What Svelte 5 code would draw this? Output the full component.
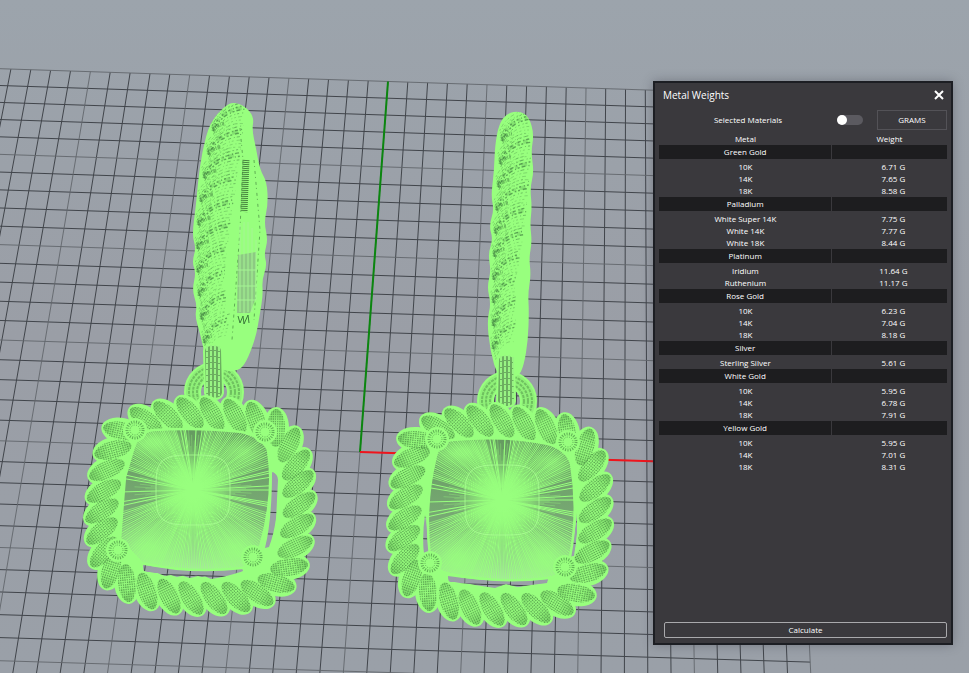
<script lang="ts">
	type Point = [number, number];

	const groups = [
		{ name: 'Green Gold', rows: [['10K', 6.71], ['14K', 7.65], ['18K', 8.58]] },
		{ name: 'Palladium', rows: [['White Super 14K', 7.75], ['White 14K', 7.77], ['White 18K', 8.44]] },
		{ name: 'Platinum', rows: [['Iridium', 11.64], ['Ruthenium', 11.17]] },
		{ name: 'Rose Gold', rows: [['10K', 6.23], ['14K', 7.04], ['18K', 8.18]] },
		{ name: 'Silver', rows: [['Sterling Silver', 5.61]] },
		{ name: 'White Gold', rows: [['10K', 5.95], ['14K', 6.78], ['18K', 7.91]] },
		{ name: 'Yellow Gold', rows: [['10K', 5.95], ['14K', 7.01], ['18K', 8.31]] }
	] as { name: string; rows: [string, number][] }[];

	let selectedOnly = $state(false);
	let open = $state(true);

	// perspective of the ground plane, origin where the axes meet
	const project = (i: number, j: number): Point => {
		const w = 1 + 0.0001 * i + 0.005746 * j;
		return [(360 + 22.13 * i + 3.629 * j) / w, (452 + 0.735 * i - 18.057 * j) / w];
	};
	const segment = (a: Point, b: Point) => `M${a[0].toFixed(1)} ${a[1].toFixed(1)}L${b[0].toFixed(1)} ${b[1].toFixed(1)}`;

	let major = '';
	let minor = '';
	for (let n = -20; n <= 20; n++) {
		const d = segment(project(n, -12), project(n, 20)) + (n >= -12 ? segment(project(-20, n), project(20, n)) : '');
		if (n % 5 === 0) major += d;
		else minor += d;
	}

	const smooth = (pts: Point[]) => {
		const mid = (a: Point, b: Point) => `${((a[0] + b[0]) / 2).toFixed(1)} ${((a[1] + b[1]) / 2).toFixed(1)}`;
		let d = `M${mid(pts[pts.length - 1], pts[0])}`;
		pts.forEach((p, k) => (d += `Q${p[0]} ${p[1]} ${mid(p, pts[(k + 1) % pts.length])}`));
		return d + 'Z';
	};

	const rope = (pts: Point[]) =>
		pts.map((p, k) => {
			const a = pts[(k + pts.length - 1) % pts.length];
			const b = pts[(k + 1) % pts.length];
			const tangent = (Math.atan2(b[1] - a[1], b[0] - a[0]) * 180) / Math.PI;
			return { x: p[0], y: p[1], angle: Math.round(tangent + 54) };
		});

	// facet rays run from the culet to the girdle, densest towards the corners
	const rays = (c: Point, rx: number, ry: number) => {
		let fine = '';
		let bold = '';
		let hatch = '';
		for (let k = 0; k < 240; k++) {
			const t = (k * Math.PI) / 120;
			const cos = Math.cos(t);
			const sin = Math.sin(t);
			const r = 1 / Math.pow(Math.pow(Math.abs(cos), 5) + Math.pow(Math.abs(sin), 5), 0.2);
			const diagonal = Math.abs(Math.sin(2 * t));
			const end: Point = [c[0] + cos * r * rx, c[1] + sin * r * ry];
			const wobble = ((k * 7) % 5) * 0.07;
			if (k % 6 === (k % 4 ? 0 : 1) || k % 7 === 0 || (k % 4 === 0 && diagonal > 0.35)) bold += segment(c, end);
			else if (diagonal > 0.5 || sin > 0.8) fine += segment(c, end);
			hatch += segment(
				[c[0] + cos * r * rx * 0.15, c[1] + sin * r * ry * 0.15],
				[c[0] + cos * r * rx * (0.48 + wobble), c[1] + sin * r * ry * (0.48 + wobble)]
			);
		}
		return { fine, bold, hatch };
	};

	const squircle = (c: Point, rx: number, ry: number) => {
		const pts: Point[] = [];
		for (let k = 0; k < 32; k++) {
			const t = (k * Math.PI) / 16;
			const r = 1 / Math.pow(Math.pow(Math.abs(Math.cos(t)), 4) + Math.pow(Math.abs(Math.sin(t)), 4), 0.25);
			pts.push([+(c[0] + Math.cos(t) * r * rx).toFixed(1), +(c[1] + Math.sin(t) * r * ry).toFixed(1)]);
		}
		return smooth(pts);
	};

	// dashed bands that wrap up the twisted hoop, bowed out by the given amount
	const twists = (count: number, from: Point, to: Point, width: number, rise: number, bow: number) => {
		const out: { d: string; dash: string; w: number; o: number }[] = [];
		for (let k = 0; k < count; k++) {
			const f = k / (count - 1);
			const x = from[0] + (to[0] - from[0]) * f - bow * Math.sin(Math.PI * f);
			const y = from[1] + (to[1] - from[1]) * f;
			const span = width * (0.7 + 0.3 * Math.sin(Math.PI * Math.min(1, f + 0.2)));
			const curve = (m: number, part: number) =>
				`M${(x + m * 0.6).toFixed(1)} ${(y + m * 2.6).toFixed(1)}q${(span * 0.25 * part).toFixed(1)} ${(-rise * 0.8 * part).toFixed(1)} ${((span - m) * part).toFixed(1)} ${(-(rise - m) * part).toFixed(1)}`;
			out.push({ d: curve(1, 0.9), dash: '6 3 3 4', w: 4, o: 0.2 });
			out.push({ d: curve(2, 0.35), dash: '3 1 1 1', w: 4, o: 0.4 });
			for (let m = -2; m < 7; m++) {
				out.push({
					d: curve(m, m < 0 ? 0.8 : 1),
					dash: m % 2 ? `${2 + (k % 3)} 3 1 2` : `2 ${2 + (k % 2)} 4 3 1 2`,
					w: m === 1 || m === 2 ? 1.4 : 0.8,
					o: m > -1 && m < 4 ? 0.6 : 0.35
				});
			}
		}
		return out;
	};

	const earrings = [
		{
			hoop: [[225, 106], [233, 102], [245, 106], [254, 117], [252, 130], [256, 148], [260, 170], [267, 182], [268, 205], [264, 222], [268, 240], [264, 254], [267, 265], [262, 280], [263, 295], [260, 313], [256, 337], [246, 363], [238, 371], [223, 371], [206, 360], [200, 333], [195, 317], [197, 305], [192, 290], [196, 273], [192, 262], [196, 248], [192, 235], [196, 205], [198, 182], [202, 152], [210, 122]] as Point[],
			twists: twists(10, [212, 126], [203, 338], 38, 24, 11),
			ring: { x: 213, y: 391, link: 'M204 351q0-6 9-6t9 6l1 42q-1 6-9 6t-9-6Z', lines: 'M207 346v50M211 345v53M215 345v53M219 346v50' },
			rope: [[122, 431], [146, 420], [168, 416], [190, 413], [212, 414], [235, 416], [256, 420], [276, 428], [289, 445], [296, 465], [298, 484], [299, 505], [297, 526], [295, 547], [289, 567], [276, 583], [257, 593], [236, 597], [214, 598], [191, 598], [169, 596], [147, 591], [127, 583], [111, 570], [104, 552], [102, 531], [102, 511], [104, 491], [107, 470], [113, 450]] as Point[],
			holes: 'M272 472Q278 474 278 480L276 518Q274 534 269 547L265 548Q272 520 272 472ZM143 565Q190 572 242 568L243 571Q226 577 211 579L202 575L190 578L177 574L165 576L155 572L144 572Z',
			gaps: 'M273 472Q277 475 277 481L276 516Q274 530 268 546L266 546Q275 512 273 472ZM143 566Q190 574 242 569L241 572L216 574L202 577L190 574L177 577L165 573L155 573L144 571Z',
			stone: 'M153 430Q200 427 242 432Q262 437 268 450Q275 495 260 547Q257 565 242 568Q190 574 142 563L120 540Q123 500 125 477L133 450Q138 432 153 430Z',
			center: [193, 490] as Point,
			rays: rays([193, 490], 77, 80),
			prongs: [[135, 430], [265, 432], [118, 550], [253, 557]] as Point[]
		},
		{
			hoop: [[507, 113], [520, 111], [529, 117], [534, 134], [531, 152], [534, 172], [530, 188], [532, 207], [530, 224], [532, 242], [529, 258], [531, 275], [528, 293], [529, 312], [528, 340], [524, 365], [518, 378], [498, 378], [490, 350], [487, 320], [491, 304], [487, 287], [491, 271], [488, 254], [493, 239], [489, 226], [494, 210], [491, 196], [494, 172], [495, 145], [499, 124]] as Point[],
			twists: twists(10, [501, 136], [492, 344], 34, 24, 3),
			ring: { x: 506, y: 400, link: 'M498 360q0-5 8-5t8 5l1 41q-1 6-9 6t-9-6Z', lines: 'M501 356v48M505 355v51M509 355v51M513 357v47' },
			rope: [[417, 440], [438, 428], [459, 423], [480, 421], [502, 421], [524, 424], [546, 427], [567, 433], [585, 447], [592, 466], [595, 488], [595, 510], [595, 531], [592, 552], [588, 573], [576, 593], [557, 603], [536, 608], [514, 609], [492, 609], [470, 607], [449, 601], [428, 592], [412, 578], [405, 559], [404, 538], [405, 518], [406, 497], [408, 477], [412, 457]] as Point[],
			holes: 'M425 515L430 551L424 553Q422 535 425 515ZM577 513L577 533L574 556L569 557Q575 535 577 513ZM448 576Q500 584 548 579L547 583L531 585L518 587L506 584L495 588L475 585L460 582L449 582Z',
			gaps: 'M426 516Q427 538 429 551L424 553Q423 535 426 516ZM577 515L577 533L574 556L571 556Q576 535 577 515ZM448 577Q500 586 548 580L545 583L531 584L518 587L506 584L495 587L475 584L460 583L449 581Z',
			stone: 'M452 440Q508 435 548 444Q566 449 571 463Q579 510 570 557Q564 576 548 578Q500 584 450 574Q433 570 430 557Q424 507 435 460Q438 442 452 440Z',
			center: [502, 500] as Point,
			rays: rays([502, 500], 77, 82),
			prongs: [[437, 439], [568, 442], [430, 563], [565, 567]] as Point[]
		}
	];
</script>

<main>
	<svg class="viewport" viewBox="0 0 969 673" preserveAspectRatio="xMinYMin slice" aria-hidden="true">
		<defs>
			<linearGradient id="sky" x1="0" y1="0" x2="0" y2="1">
				<stop offset="0" stop-color="#9ca4ac" />
				<stop offset="0.5" stop-color="#9a9ea6" />
				<stop offset="1" stop-color="#9aa0a8" />
			</linearGradient>
			<linearGradient id="facet" x1="0" y1="0" x2="0" y2="1">
				<stop offset="0" stop-color="#659a60" />
				<stop offset="0.65" stop-color="#7bab77" />
				<stop offset="1" stop-color="#aae8a0" />
			</linearGradient>
			<radialGradient id="glow">
				<stop offset="0.15" stop-color="#98ff7e" />
				<stop offset="0.5" stop-color="#98ff7e" stop-opacity="0.6" />
				<stop offset="1" stop-color="#98ff7e" stop-opacity="0" />
			</radialGradient>
			<linearGradient id="depth">
				<stop offset="0" stop-color="#367534" stop-opacity="0.35" />
				<stop offset="0.4" stop-color="#58a04e" stop-opacity="0.05" />
				<stop offset="0.65" stop-color="#58a04e" stop-opacity="0.05" />
				<stop offset="1" stop-color="#367534" stop-opacity="0.25" />
			</linearGradient>
			<pattern id="mesh" width="2.4" height="2.2" patternUnits="userSpaceOnUse">
				<rect width="1.4" height="1.2" fill="#4a8f43" opacity="0.8" />
			</pattern>
			<clipPath id="stone0"><path d={earrings[0].stone} /></clipPath>
			<clipPath id="stone1"><path d={earrings[1].stone} /></clipPath>
			<clipPath id="gaps0"><path d={earrings[0].gaps} /></clipPath>
			<clipPath id="gaps1"><path d={earrings[1].gaps} /></clipPath>
			<clipPath id="hoop0"><path d={smooth(earrings[0].hoop)} /></clipPath>
			<clipPath id="hoop1"><path d={smooth(earrings[1].hoop)} /></clipPath>
		</defs>

		<rect width="969" height="673" fill="url(#sky)" />
		<path class="grid" d={minor} />
		<path class="grid major" d={major} />
		<path class="axis-y" d={segment(project(0, 0), project(0, 20))} />
		<path class="axis-x" d={segment(project(0, 0), project(20, 0))} />

		{#each earrings as e, n}
			<circle cx={e.ring.x + 1} cy={e.ring.y + 1} r="21" class="ring-body" />
			{#each [17, 21, 25] as r}
				<circle cx={e.ring.x + 1} cy={e.ring.y + 1} {r} class="ring-mesh" />
			{/each}
			<circle cx={e.ring.x + 1} cy={e.ring.y + 1} r="29" class="ring-edge" />
			<circle cx={e.ring.x + 1} cy={e.ring.y + 1} r="14" class="ring-edge" />

			<path d={smooth(e.hoop)} fill="#98ff7e" />
			<g clip-path="url(#hoop{n})">
				{#each e.twists as t}
					<path class="twist" d={t.d} stroke-dasharray={t.dash} stroke-width={t.w} opacity={t.o} />
				{/each}
			</g>
			{#if n === 0}
				<path d="M240 128L243 160L240 230L232 340M254 160L260 230L254 320" class="seam" />
				<path d="M246 160L244 212" class="ticks" />
				<path d="M238 255L256 252L255 300L250 313H237Z" fill="#8bbd84" opacity="0.8" />
				<path d="M240 225V312M244 222V314M248 222V312M252 228V312M256 240V300M236 270H257M236 286H257M237 300H256" class="bars" />
				<path d="M238 316l2 7 3-7 1 8 4-9 1 8" class="scratch" />
			{/if}
			<path d={e.ring.link} class="link" />
			<path d={e.ring.lines} class="link-lines" />

			<path d={smooth(e.rope) + e.holes} fill="#98ff7e" fill-rule="evenodd" />
			{#each rope(e.rope) as lobe}
				<ellipse transform="translate({lobe.x} {lobe.y}) rotate({lobe.angle})" rx="21" ry="13" fill="#98ff7e" />
			{/each}
			{#each rope(e.rope) as lobe}
				<g transform="translate({lobe.x} {lobe.y}) rotate({lobe.angle})">
					<ellipse rx="19" ry="8" fill="url(#depth)" />
					<ellipse rx="19" ry="9" fill="url(#mesh)" />
				</g>
			{/each}

			<!-- ground seen through the openings of the frame -->
			<g clip-path="url(#gaps{n})">
				<rect width="969" height="673" fill="url(#sky)" />
				<path class="grid" d={minor} />
				<path class="grid major" d={major} />
			</g>

			<g clip-path="url(#stone{n})">
				<path d={e.stone} fill="url(#facet)" />
				<path d={e.rays.fine} class="ray" />
				<path d={e.rays.bold} class="ray bold" />
				<path d={e.rays.hatch} class="hatch" />
				<ellipse cx={e.center[0]} cy={e.center[1]} rx="36" ry="34" fill="url(#glow)" />
				<ellipse cx={e.center[0] - 40} cy={e.center[1] - 48} rx="40" ry="20" fill="url(#glow)" opacity="0.8" />
				<ellipse cx={e.center[0] + 50} cy={e.center[1] - 38} rx="24" ry="18" fill="url(#glow)" opacity="0.6" />
				<ellipse cx={e.center[0] - 44} cy={e.center[1] + 60} rx="44" ry="36" fill="url(#glow)" opacity="0.8" />
				<ellipse cx={e.center[0] + 44} cy={e.center[1] + 60} rx="38" ry="34" fill="url(#glow)" opacity="0.8" />
				<path d={squircle(e.center, 37, 35)} class="facet-ring" />
			</g>
			<path d={e.stone} class="girdle" />

			{#each e.prongs as p}
				<circle cx={p[0]} cy={p[1]} r="12" fill="#98ff7e" />
				<circle cx={p[0]} cy={p[1]} r="8" class="prong" />
				<circle cx={p[0]} cy={p[1]} r="5" class="prong thin" />
			{/each}
		{/each}
	</svg>

	{#if open}
		<section class="panel" aria-labelledby="panel-title">
			<header>
				<h1 id="panel-title">Metal Weights</h1>
				<button type="button" class="close" aria-label="Close" onclick={() => (open = false)}>
					<svg viewBox="0 0 10 10" width="10" height="10"><path d="M1 1L9 9M9 1L1 9" /></svg>
				</button>
			</header>

			<div class="options">
				<label for="selected">Selected Materials</label>
				<input id="selected" type="checkbox" bind:checked={selectedOnly} />
				<button type="button" class="unit">GRAMS</button>
			</div>

			<table>
				<thead>
					<tr><th scope="col" class="metal">Metal</th><th scope="col">Weight</th></tr>
				</thead>
				{#each groups as group}
					<tbody>
						<tr class="group"><th scope="rowgroup">{group.name}</th><td></td></tr>
						{#each group.rows as [metal, weight]}
							<tr><td>{metal}</td><td class="weight">{weight.toFixed(2)} G</td></tr>
						{/each}
					</tbody>
				{/each}
			</table>

			<button type="button" class="calculate">Calculate</button>
		</section>
	{/if}
</main>

<style>
	:global(body) { margin: 0; background: #9ca4ac; }
	main {
		position: relative;
		display: flex;
		justify-content: flex-end;
		box-sizing: border-box;
		min-height: 100vh;
		padding: 81px 16px 28px;
		overflow: hidden;
		font-family: "Open Sans", "Noto Sans", sans-serif;
		font-size: 8px;
		line-height: 12px;
		color: #fff;
	}
	.viewport { position: absolute; inset: 0; width: 100%; height: 100%; }

	.grid { fill: none; stroke: #41454b; stroke-width: 1; }
	.grid.major { stroke: #62666c; stroke-width: 0.9; }
	.axis-x { stroke: #f0141c; stroke-width: 2; }
	.axis-y { stroke: #0b860f; stroke-width: 2; }

	.ring-body { fill: none; stroke: #8ff078; stroke-width: 15; }
	.ring-mesh { fill: none; stroke: #4f9148; stroke-width: 2; stroke-dasharray: 3 1; opacity: 0.5; }
	.ring-edge { fill: none; stroke: #98ff7e; stroke-width: 2; }
	.twist { fill: none; stroke: #37733a; }
	.seam { fill: none; stroke: #5fae53; stroke-width: 1; stroke-dasharray: 3 3 1 4; }
	.ticks { stroke: #47843f; stroke-width: 7; stroke-dasharray: 1 1; }
	.bars { fill: none; stroke: #a5f594; stroke-width: 1; }
	.scratch { fill: none; stroke: #3c7b3c; stroke-width: 1; }
	.link { fill: #6cae60; stroke: #98ff7e; stroke-width: 2; }
	.link-lines { fill: none; stroke: #98f483; stroke-width: 2; stroke-dasharray: 5 1; }

	.ray { fill: none; stroke: #98ff7e; stroke-width: 0.7; }
	.ray.bold { stroke-width: 1; }
	.hatch { fill: none; stroke: #98ff7e; stroke-width: 0.5; opacity: 0.7; }
	.facet-ring { fill: none; stroke: #a9ff93; stroke-width: 0.8; }
	.girdle { fill: none; stroke: #98ff7e; stroke-width: 2.5; }
	.prong { fill: none; stroke: #4c9347; stroke-width: 3; stroke-dasharray: 1 1.4; opacity: 0.75; }
	.prong.thin { stroke-width: 1; }

	.panel {
		position: relative;
		display: flex;
		flex-direction: column;
		box-sizing: border-box;
		width: 300px;
		padding: 3px 4px 5px;
		border: 2px solid #1c1e23;
		background: #3a393d;
		box-shadow: 0 0 10px rgba(60, 62, 75, 0.4);
	}
	header {
		display: flex;
		align-items: center;
		justify-content: space-between;
		height: 18px;
		padding: 0 2px 0 4px;
	}
	h1 { margin: 0; font-size: 10px; font-weight: 400; }
	button { font: inherit; color: inherit; cursor: pointer; }
	.close {
		display: flex;
		padding: 1px;
		border: 0;
		background: none;
	}
	.close path { fill: none; stroke: #fff; stroke-width: 2; }

	.options {
		display: grid;
		grid-template-columns: 1fr 26px 70px;
		column-gap: 14px;
		align-items: center;
		height: 20px;
		margin: 6px 0 3px;
		padding-left: 14px;
	}
	.options label { text-align: center; }
	.options input {
		appearance: none;
		width: 26px;
		height: 10px;
		margin: 0;
		border-radius: 5px;
		background: #5b5a60;
	}
	.options input::before {
		content: '';
		display: block;
		width: 10px;
		height: 10px;
		border-radius: 50%;
		background: #fff;
	}
	.options input:checked::before { margin-left: auto; }
	.unit {
		height: 20px;
		padding: 0;
		border: 1px solid #535257;
		background: none;
	}

	table { width: 100%; border-collapse: collapse; table-layout: fixed; }
	th, td { height: 12px; padding: 0; font-weight: 400; text-align: center; }
	.metal { width: 60%; }
	.weight { padding-left: 8px; }
	.group th, .group td {
		height: 14px;
		border-bottom: 2px solid #3a393d;
		background: #1d1d1f;
		background-clip: padding-box;
	}
	.group th { border-right: 1px solid #3a393d; }
	.calculate {
		height: 16px;
		margin: auto 0 0 5px;
		padding: 0;
		border: 1px solid #a9a9ac;
		border-radius: 2px;
		background: none;
	}
</style>
